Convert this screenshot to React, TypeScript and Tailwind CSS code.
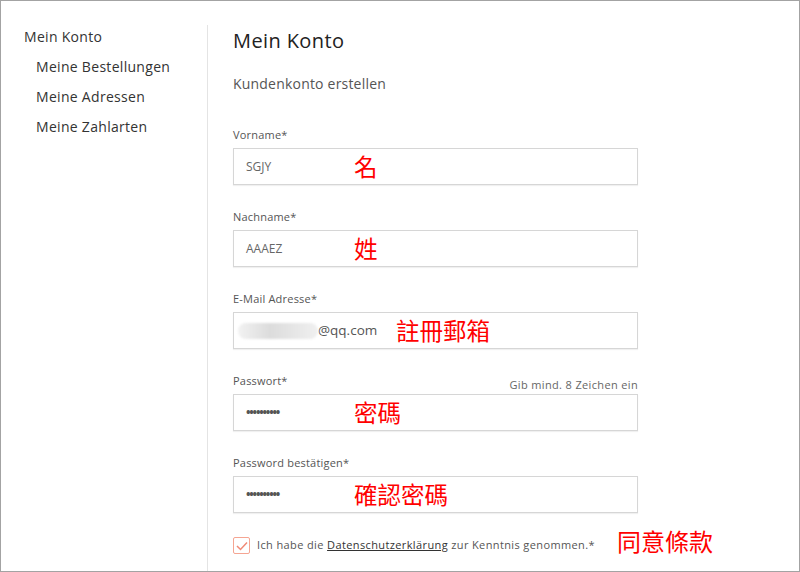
import React from "react";

const sans = "font-['Open_Sans',sans-serif]";
const cjk = "font-['Noto_Sans_CJK_TC',sans-serif]";

type FieldProps = {
  label: string;
  hint?: string;
  children: React.ReactNode;
};

function Field({ label, hint, children }: FieldProps) {
  return (
    <div className="w-[405px]">
      <div className="flex items-end justify-between h-[15px] mb-[6px] leading-[15px]">
        <span className="text-[11px] text-[#555] tracking-[0.2px]">{label}</span>
        {hint && <span className="text-[11px] text-[#666] translate-y-[4px] tracking-[0.35px]">{hint}</span>}
      </div>
      <div className="h-[37px] border border-[#d6d6d6] shadow-[0_1px_1px_rgba(0,0,0,0.06)] flex items-center">
        {children}
      </div>
    </div>
  );
}

function Note({ text }: { text: string }) {
  return <span className={`${cjk} text-[23.5px] leading-none text-[#f00]`}>{text}</span>;
}

function Dots() {
  return <span className="pl-[12px] w-[120px] text-[12px] text-[#555] tracking-[-1.2px] font-bold">••••••••••</span>;
}

export default function App() {
  return (
    <div className={`${sans} w-[800px] h-[572px] border border-[#a3a3a3] bg-white overflow-hidden flex`}>
      <aside className="w-[206px] pt-[26px] pl-[23px] text-[#333]">
        <div className="text-[14px] tracking-[0.3px] leading-[20px]">Mein Konto</div>
        <nav className="pl-[12px] mt-[10px] flex flex-col gap-[10px] text-[14px] tracking-[0.3px] leading-[20px]">
          <a>Meine Bestellungen</a>
          <a>Meine Adressen</a>
          <a>Meine Zahlarten</a>
        </nav>
      </aside>

      <div className="mt-[24px] w-px bg-[#e4e4e4] self-stretch" />

      <main className="pl-[25px] pt-[27px] text-[#333]">
        <h1 className="text-[20px] leading-[26px] tracking-[0.4px] text-[#222]">Mein Konto</h1>
        <p className="mt-[20px] text-[14px] leading-[20px] tracking-[0.2px] text-[#555]">Kundenkonto erstellen</p>

        <div className="mt-[33px] flex flex-col gap-[24px]">
          <Field label="Vorname*">
            <span className="pl-[12px] w-[120px] text-[12px] text-[#666]">SGJY</span>
            <Note text="名" />
          </Field>
          <Field label="Nachname*">
            <span className="pl-[12px] w-[120px] text-[12px] text-[#666]">AAAEZ</span>
            <Note text="姓" />
          </Field>
          <Field label="E-Mail Adresse*">
            <span className="ml-[4px] w-[80px] h-[16px] rounded-full bg-[linear-gradient(90deg,#f2f2f2,#dcdcdc_40%,#e6e6e6_70%,#f0f0f0)] blur-[1px]" />
            <span className="text-[13.5px] text-[#555] w-[78px]">@qq.com</span>
            <Note text="註冊郵箱" />
          </Field>
          <Field label="Passwort*" hint="Gib mind. 8 Zeichen ein">
            <Dots />
            <Note text="密碼" />
          </Field>
          <Field label="Password bestätigen*">
            <Dots />
            <Note text="確認密碼" />
          </Field>
        </div>

        <div className="mt-[24px] flex items-center">
          <span className="w-[17px] h-[17px] border-[1.5px] border-[#f5a592] rounded-[2px] flex items-center justify-center">
            <svg width="12" height="10" viewBox="0 0 12 10" fill="none">
              <path d="M1 5l3.5 3.5L11 1.5" stroke="#f08a76" strokeWidth="1.5" />
            </svg>
          </span>
          <span className="ml-[7px] text-[11px] text-[#555] tracking-[0.38px]">
            Ich habe die <span className="underline text-[#333]">Datenschutzerklärung</span> zur Kenntnis genommen.*
          </span>
          <span className={`${cjk} ml-[22px] -mt-[10px] text-[24px] leading-none text-[#f00]`}>同意條款</span>
        </div>
      </main>
    </div>
  );
}
